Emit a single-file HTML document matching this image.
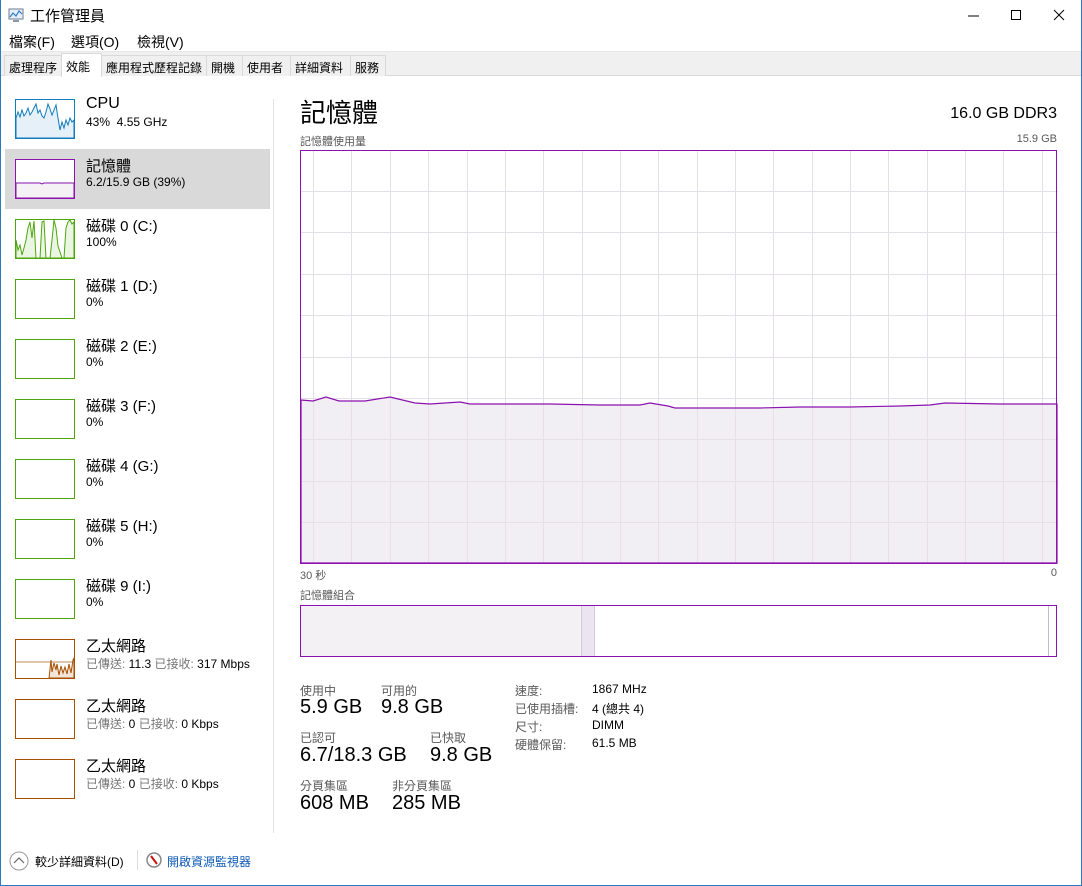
<!DOCTYPE html>
<html><head><meta charset="utf-8">
<style>
*{margin:0;padding:0;box-sizing:border-box}
body{width:1082px;height:886px;overflow:hidden;background:#fff;font-family:"Liberation Sans","Noto Sans CJK TC",sans-serif;color:#000;position:relative}
.abs{position:absolute;white-space:nowrap}
.win{position:absolute;left:0;top:0;width:1082px;height:886px;border:1px solid #2b79c2;border-top:none}
.tab{position:absolute;top:55px;height:21px;border:1px solid #d9d9d9;border-bottom:none;background:#f0f0f0;font-size:12px;padding:3px 4px 0;}
.item .t{position:absolute;left:86px;font-size:15px}
.item .s{position:absolute;left:86px;font-size:12px;color:#000}
.g{color:#777}
.lbl{font-size:12px;color:#595959}
.big{font-size:20px}
</style></head><body>
<div class="win"></div>
<!-- title bar -->
<svg class="abs" style="left:8px;top:8px" width="18" height="16" viewBox="0 0 18 16"><rect x="1" y="1" width="14" height="10" fill="#e8eef5" stroke="#6b7d91"/><polyline points="2,9 5,5 8,8 11,3 14,6" fill="none" stroke="#2e7bc4" stroke-width="1.2"/><rect x="5" y="12" width="6" height="2" fill="#8896a6"/></svg>
<div class="abs" style="left:30px;top:5px;font-size:15px">工作管理員</div>
<svg class="abs" style="left:965px;top:9px" width="100" height="14"><line x1="3" y1="7" x2="14" y2="7" stroke="#000"/><rect x="46.5" y="1.5" width="9" height="9" fill="none" stroke="#000"/><path d="M89 1 L99 11 M99 1 L89 11" stroke="#000"/></svg>
<!-- menu -->
<div class="abs" style="left:9px;top:32px;font-size:14px">檔案(F)</div>
<div class="abs" style="left:71px;top:32px;font-size:14px">選項(O)</div>
<div class="abs" style="left:137px;top:32px;font-size:14px">檢視(V)</div>
<!-- tabbar -->
<div class="abs" style="left:1px;top:51px;width:1080px;height:25px;background:#f0f0f0;border-top:1px solid #e8e8e8;border-bottom:1px solid #d9d9d9"></div>
<div class="tab" style="left:4px;width:58px">處理程序</div>
<div class="tab" style="left:61px;top:53px;height:24px;width:41px;background:#fff;padding-top:4px">效能</div>
<div class="tab" style="left:101px;width:106px">應用程式歷程記錄</div>
<div class="tab" style="left:206px;width:37px">開機</div>
<div class="tab" style="left:242px;width:49px">使用者</div>
<div class="tab" style="left:290px;width:61px">詳細資料</div>
<div class="tab" style="left:350px;width:36px">服務</div>

<!-- sidebar -->
<div class="abs" style="left:5px;top:149px;width:265px;height:60px;background:#d9d9d9"></div>
<div class="abs" style="left:273px;top:99px;width:1px;height:734px;background:#e3e3e3"></div>

<svg class="abs" style="left:0;top:0" width="280" height="820">
<!-- CPU -->
<rect x="15.5" y="99.5" width="59" height="39" fill="#fff" stroke="#117dbb"/>
<polygon points="16,118 18,112 20,117 22,110 24,116 26,113 28,108 30,115 32,112 34,108 36,104 38,113 40,110 42,116 44,118 46,112 48,104 50,109 52,115 54,110 56,105 58,118 60,130 62,122 64,128 66,120 68,125 70,118 72,122 74,120 74,138 16,138" fill="#e6f0f8" stroke="#117dbb" stroke-width="1"/>
<!-- mem -->
<rect x="15.5" y="159.5" width="59" height="39" fill="#fff" stroke="#8b12ae"/>
<polygon points="16,183 40,183 42,184 44,183 74,183 74,198 16,198" fill="#f4f2f4" stroke="#8b12ae" stroke-width="1"/>
<!-- disk0 -->
<rect x="15.5" y="219.5" width="59" height="39" fill="#fff" stroke="#4da60c"/>
<polygon points="16,240 18,250 20,245 22,255 24,248 26,240 28,228 30,222 32,238 34,221 36,258 40,258 42,222 44,221 46,258 50,258 52,240 54,220 56,228 58,246 60,252 62,258 64,258 66,228 68,222 70,220 72,224 74,222 74,258 16,258" fill="#ebf5e3" stroke="#4da60c" stroke-width="1"/>
<g fill="#fff" stroke="#4da60c">
<rect x="15.5" y="279.5" width="59" height="39"/><rect x="15.5" y="339.5" width="59" height="39"/><rect x="15.5" y="399.5" width="59" height="39"/><rect x="15.5" y="459.5" width="59" height="39"/><rect x="15.5" y="519.5" width="59" height="39"/><rect x="15.5" y="579.5" width="59" height="39"/>
</g>
<!-- eth -->
<rect x="15.5" y="639.5" width="59" height="39" fill="#fff" stroke="#a74f01"/>
<line x1="16" y1="662" x2="74" y2="662" stroke="#c08a5a"/>
<polygon points="49,678 51,660 52,672 54,663 56,670 57,664 59,675 61,666 63,673 65,667 67,674 69,664 71,673 73,660 74,658 74,678" fill="#f4e5d8" stroke="#a74f01" stroke-width="1"/>
<rect x="15.5" y="699.5" width="59" height="39" fill="#fff" stroke="#a74f01"/>
<rect x="15.5" y="759.5" width="59" height="39" fill="#fff" stroke="#a74f01"/>
</svg>

<div class="item">
<div class="abs t" style="top:95px;font-size:16px">CPU</div><div class="abs s" style="top:115px">43%&nbsp; 4.55 GHz</div>
<div class="abs t" style="top:155px">記憶體</div><div class="abs s" style="top:175px">6.2/15.9 GB (39%)</div>
<div class="abs t" style="top:215px">磁碟 0 (C:)</div><div class="abs s" style="top:235px">100%</div>
<div class="abs t" style="top:275px">磁碟 1 (D:)</div><div class="abs s" style="top:295px">0%</div>
<div class="abs t" style="top:335px">磁碟 2 (E:)</div><div class="abs s" style="top:355px">0%</div>
<div class="abs t" style="top:395px">磁碟 3 (F:)</div><div class="abs s" style="top:415px">0%</div>
<div class="abs t" style="top:455px">磁碟 4 (G:)</div><div class="abs s" style="top:475px">0%</div>
<div class="abs t" style="top:515px">磁碟 5 (H:)</div><div class="abs s" style="top:535px">0%</div>
<div class="abs t" style="top:575px">磁碟 9 (I:)</div><div class="abs s" style="top:595px">0%</div>
<div class="abs t" style="top:635px">乙太網路</div><div class="abs s" style="top:655px"><span class="g">已傳送:</span> 11.3 <span class="g">已接收:</span> 317 Mbps</div>
<div class="abs t" style="top:695px">乙太網路</div><div class="abs s" style="top:715px"><span class="g">已傳送:</span> 0 <span class="g">已接收:</span> 0 Kbps</div>
<div class="abs t" style="top:755px">乙太網路</div><div class="abs s" style="top:775px"><span class="g">已傳送:</span> 0 <span class="g">已接收:</span> 0 Kbps</div>
</div>

<!-- main -->
<div class="abs" style="left:300px;top:93px;font-size:26px">記憶體</div>
<div class="abs" style="right:25px;top:105px;font-size:16px">16.0 GB DDR3</div>
<div class="abs lbl" style="left:300px;top:133px;font-size:11px">記憶體使用量</div>
<div class="abs lbl" style="right:25px;top:133px;font-size:11px">15.9 GB</div>

<svg class="abs" style="left:300px;top:150px" width="758" height="414">
<g stroke="#e5e0e8" stroke-width="1">
<line x1="13.5" y1="0" x2="13.5" y2="414"/><line x1="51.5" y1="0" x2="51.5" y2="414"/><line x1="90.5" y1="0" x2="90.5" y2="414"/><line x1="128.5" y1="0" x2="128.5" y2="414"/><line x1="167.5" y1="0" x2="167.5" y2="414"/><line x1="205.5" y1="0" x2="205.5" y2="414"/><line x1="243.5" y1="0" x2="243.5" y2="414"/><line x1="282.5" y1="0" x2="282.5" y2="414"/><line x1="320.5" y1="0" x2="320.5" y2="414"/><line x1="358.5" y1="0" x2="358.5" y2="414"/><line x1="397.5" y1="0" x2="397.5" y2="414"/><line x1="435.5" y1="0" x2="435.5" y2="414"/><line x1="473.5" y1="0" x2="473.5" y2="414"/><line x1="512.5" y1="0" x2="512.5" y2="414"/><line x1="550.5" y1="0" x2="550.5" y2="414"/><line x1="588.5" y1="0" x2="588.5" y2="414"/><line x1="627.5" y1="0" x2="627.5" y2="414"/><line x1="665.5" y1="0" x2="665.5" y2="414"/><line x1="703.5" y1="0" x2="703.5" y2="414"/><line x1="742.5" y1="0" x2="742.5" y2="414"/>
<line x1="0" y1="41.5" x2="758" y2="41.5"/><line x1="0" y1="82.5" x2="758" y2="82.5"/><line x1="0" y1="124.5" x2="758" y2="124.5"/><line x1="0" y1="165.5" x2="758" y2="165.5"/><line x1="0" y1="207.5" x2="758" y2="207.5"/><line x1="0" y1="248.5" x2="758" y2="248.5"/><line x1="0" y1="289.5" x2="758" y2="289.5"/><line x1="0" y1="331.5" x2="758" y2="331.5"/><line x1="0" y1="372.5" x2="758" y2="372.5"/>
</g>
<polygon points="1,250 13,251 26,247 39,251 65,251 90,247 115,253 130,254 145,253 160,252 170,254 210,254 250,254 300,255 340,255 350,253 368,256 375,258 400,258 460,258 500,257 550,257 600,256 630,255 645,253 700,254 757,254 757,413 1,413" fill="rgba(230,224,234,0.5)" stroke="#8b12ae" stroke-width="1.2"/>
<rect x="0.5" y="0.5" width="756" height="413" fill="none" stroke="#8b12ae"/>
</svg>
<div class="abs lbl" style="left:300px;top:567px;font-size:11px">30 秒</div>
<div class="abs lbl" style="right:25px;top:567px;font-size:11px">0</div>
<div class="abs lbl" style="left:300px;top:587px;font-size:11px">記憶體組合</div>
<svg class="abs" style="left:300px;top:605px" width="758" height="53">
<rect x="1" y="1" width="280" height="51" fill="#f3f1f4"/>
<rect x="281" y="1" width="13" height="51" fill="#ece4f0"/>
<line x1="281.5" y1="1" x2="281.5" y2="52" stroke="#d5c7dc"/>
<line x1="294.5" y1="1" x2="294.5" y2="52" stroke="#d5c7dc"/>
<line x1="748.5" y1="1" x2="748.5" y2="52" stroke="#c9b8d1"/>
<rect x="0.5" y="0.5" width="756" height="51" fill="none" stroke="#8b12ae"/>
</svg>

<div class="abs lbl" style="left:300px;top:682px">使用中</div>
<div class="abs big" style="left:300px;top:696px">5.9 GB</div>
<div class="abs lbl" style="left:381px;top:682px">可用的</div>
<div class="abs big" style="left:381px;top:696px">9.8 GB</div>
<div class="abs lbl" style="left:300px;top:729px">已認可</div>
<div class="abs big" style="left:300px;top:744px">6.7/18.3 GB</div>
<div class="abs lbl" style="left:430px;top:729px">已快取</div>
<div class="abs big" style="left:430px;top:744px">9.8 GB</div>
<div class="abs lbl" style="left:300px;top:777px">分頁集區</div>
<div class="abs big" style="left:300px;top:792px">608 MB</div>
<div class="abs lbl" style="left:392px;top:777px">非分頁集區</div>
<div class="abs big" style="left:392px;top:792px">285 MB</div>

<div class="abs lbl" style="left:515px;top:682px">速度:</div><div class="abs" style="left:592px;top:682px;font-size:12px">1867 MHz</div>
<div class="abs lbl" style="left:515px;top:700px">已使用插槽:</div><div class="abs" style="left:592px;top:700px;font-size:12px">4 (總共 4)</div>
<div class="abs lbl" style="left:515px;top:718px">尺寸:</div><div class="abs" style="left:592px;top:718px;font-size:12px">DIMM</div>
<div class="abs lbl" style="left:515px;top:736px">硬體保留:</div><div class="abs" style="left:592px;top:736px;font-size:12px">61.5 MB</div>

<!-- footer -->
<svg class="abs" style="left:9px;top:851px" width="20" height="20"><circle cx="10" cy="10" r="9" fill="none" stroke="#999"/><polyline points="5,12 10,7 15,12" fill="none" stroke="#666" stroke-width="1.2"/></svg>
<div class="abs" style="left:35px;top:853px;font-size:12px">較少詳細資料(D)</div>
<div class="abs" style="left:137px;top:850px;width:1px;height:20px;background:#ddd"></div>
<svg class="abs" style="left:146px;top:852px" width="16" height="16"><circle cx="8" cy="8" r="7" fill="#fff" stroke="#888" stroke-width="1.5"/><line x1="5" y1="4" x2="11" y2="12" stroke="#c11" stroke-width="2"/></svg>
<div class="abs" style="left:167px;top:853px;font-size:12px;color:#0f5bb5">開啟資源監視器</div>
</body></html>
